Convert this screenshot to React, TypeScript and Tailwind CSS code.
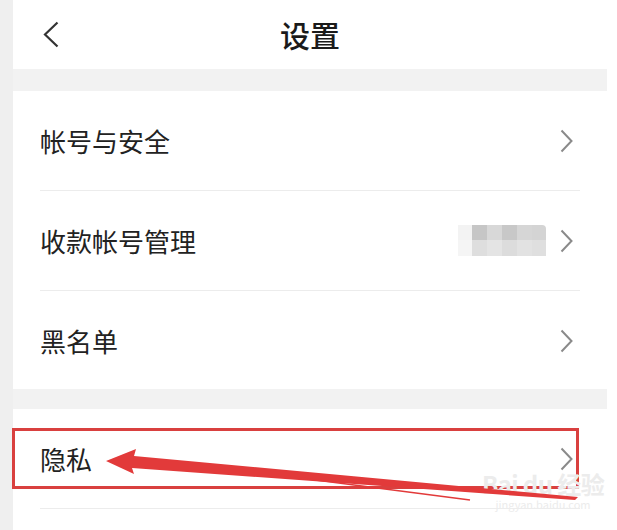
const rows = [
  { label: "帐号与安全", blurred: false },
  { label: "收款帐号管理", blurred: true },
  { label: "黑名单", blurred: false },
];

function Chevron() {
  return (
    <svg width="13" height="24" viewBox="0 0 13 24" className="text-[#8a8a8a]">
      <polyline points="1.5,1.5 11.5,12 1.5,22.5" fill="none" stroke="currentColor" strokeWidth="2" />
    </svg>
  );
}

function Mosaic() {
  return (
    <div className="mr-[14px] flex flex-col">
      <div className="flex">
        <div className="h-[15px] w-[14px] bg-[#f3f3f3]" />
        <div className="h-[15px] w-[15px] bg-[#c6c6c6]" />
        <div className="h-[15px] w-[15px] bg-[#d8d8d8]" />
        <div className="h-[15px] w-[15px] bg-[#c8c8c8]" />
        <div className="h-[15px] w-[15px] bg-[#d6d6d6]" />
        <div className="h-[15px] w-[14px] rounded-tr-[4px] bg-[#d4d4d4]" />
      </div>
      <div className="flex">
        <div className="h-[16px] w-[14px] bg-[#f5f5f5]" />
        <div className="h-[16px] w-[15px] bg-[#dedede]" />
        <div className="h-[16px] w-[15px] bg-[#e4e4e4]" />
        <div className="h-[16px] w-[15px] bg-[#dcdcdc]" />
        <div className="h-[16px] w-[15px] bg-[#e2e2e2]" />
        <div className="h-[16px] w-[14px] bg-[#dfdfdf]" />
      </div>
    </div>
  );
}

function Row({ label, blurred }: { label: string; blurred?: boolean }) {
  return (
    <div className="mx-[27px] flex h-[100px] items-center justify-between border-b border-[#ececec]">
      <span className="text-[26px] text-[#222]">{label}</span>
      <div className="mr-[7px] flex items-center">
        {blurred ? <Mosaic /> : null}
        <Chevron />
      </div>
    </div>
  );
}

export default function App() {
  return (
    <div
      className="relative flex h-[530px] w-[617px] overflow-hidden bg-white"
      style={{ fontFamily: '"Noto Sans CJK SC", "Noto Sans", sans-serif' }}
    >
      <div className="w-[13px] shrink-0 bg-[#efefef]" />

      <div className="flex w-[594px] shrink-0 flex-col">
        <header className="relative flex h-[69px] items-center justify-center">
          <svg
            width="16"
            height="27"
            viewBox="0 0 16 27"
            className="absolute left-[30px] top-[21px] text-[#333]"
          >
            <polyline points="14.5,1.5 2,13.5 14.5,25.5" fill="none" stroke="currentColor" strokeWidth="2.2" />
          </svg>
          <h1 className="text-[30px] font-medium text-[#1a1a1a]">设置</h1>
        </header>

        <div className="h-[22px] bg-[#f2f2f2]" />

        <section className="h-[298px]">
          {rows.map((row) => (
            <Row key={row.label} label={row.label} blurred={row.blurred} />
          ))}
        </section>

        <div className="h-[20px] bg-[#f2f2f2]" />

        <section>
          <Row label="隐私" />
        </section>
      </div>

      {/* red highlight box */}
      <div className="absolute left-[12px] top-[428px] h-[61px] w-[567px] border-[3px] border-[#d9403f]" />

      {/* watermark */}
      <div className="absolute left-[482px] top-[470px] flex flex-col items-center text-[#ececec]">
        <span className="text-[24px] font-bold leading-[28px] tracking-tight">Bai du 经验</span>
        <span className="text-[11px] leading-[13px]">jingyan.baidu.com</span>
      </div>

      {/* arrow */}
      <svg className="absolute left-0 top-0" width="617" height="530" viewBox="0 0 617 530">
        <polygon
          points="106,461 136,449 134,456 578,497 575,500 132,468 134,474"
          fill="#e23a3a"
        />
        <line x1="300" y1="478" x2="470" y2="500" stroke="#e23a3a" strokeWidth="1.5" />
      </svg>
    </div>
  );
}
